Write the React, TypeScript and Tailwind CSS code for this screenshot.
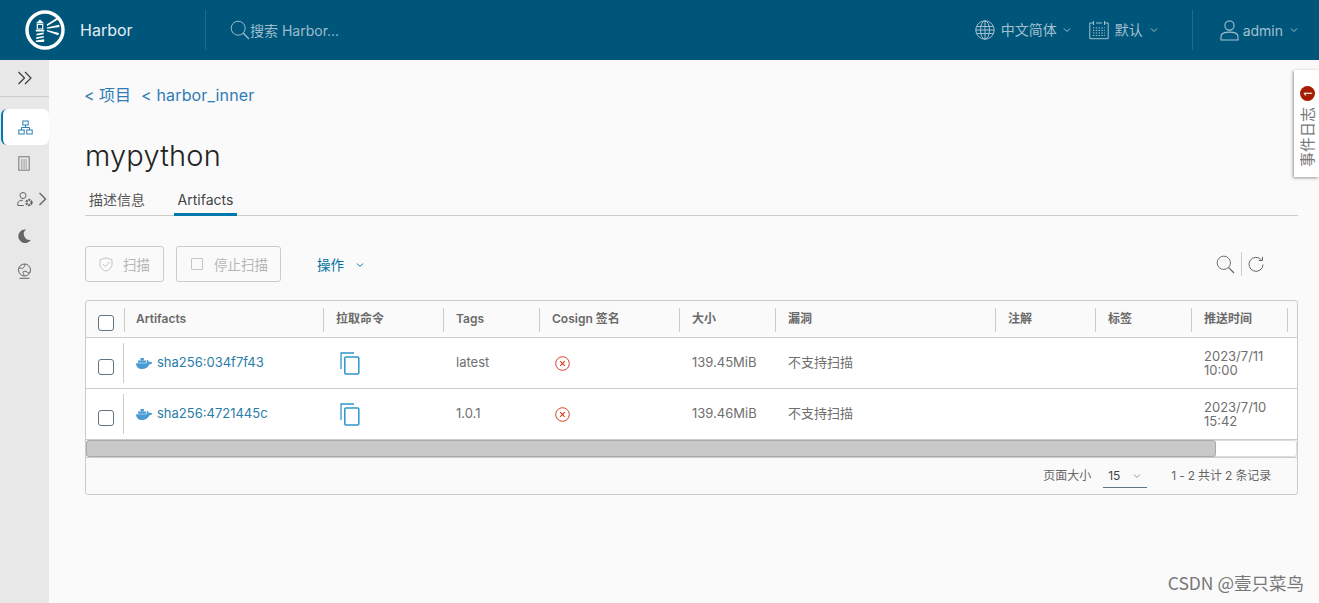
import React from "react";

const font = { fontFamily: 'Inter,"Noto Sans CJK SC",sans-serif' };

function Logo() {
  return (
    <svg width="40" height="40" viewBox="0 0 40 40" fill="none">
      <circle cx="20" cy="20" r="18" stroke="#fff" strokeWidth="3.400" />
      <path d="M11 13.200 L15 9.500 L19 13.200 Z" fill="#fff" />
      <path d="M12.300 14.300h5.400v4.700h-5.400z" stroke="#fff" strokeWidth="1.200" />
      <path d="M10.800 19.800h8.400v1.600h-8.400z" fill="#fff" />
      <path d="M11.600 23.800l7-1.200v1.600l-7.100 1.200zM11.300 27.200l7.500-1.300.1 1.700-7.800 1.300zM11 30.600l8.100-1.300.2 2.200-1 .6h-7.600z" fill="#fff" />
      <path d="M21.700 14.600l10.200-6.800 1.500 1.400-11.200 6.900zM21.900 17.500l12.200-2.700.5 2.300-12.700 1.600zM21.900 20l12.100 3-.8 2.300-11.300-4z" fill="#fff" />
    </svg>
  );
}

function Chevron({ cls = "" }: { cls?: string }) {
  return (
    <svg width="8" height="6" viewBox="0 0 8 6" fill="none" className={cls}>
      <path d="M1 1.500l3 3 3-3" stroke="currentColor" strokeWidth="1" />
    </svg>
  );
}

function Globe() {
  return (
    <svg width="20" height="20" viewBox="0 0 20 20" fill="none" stroke="currentColor" strokeWidth="1">
      <circle cx="10" cy="10" r="9.200" />
      <ellipse cx="10" cy="10" rx="4.500" ry="9.200" />
      <path d="M10 .8v18.400M1.600 6.500h16.800M1.600 13.500h16.800M.8 10h18.400" />
    </svg>
  );
}

function Calendar() {
  return (
    <svg width="20" height="20" viewBox="0 0 20 20" fill="none" stroke="currentColor" strokeWidth="1">
      <path d="M4 3H.8v15.700h18.400V3H16M7 3h6M4.500 1v4M15.500 1v4" />
      <path d="M4 8h12M4 10.500h12M4 13h12M4 15.500h12" strokeDasharray="1.400 1.400" />
    </svg>
  );
}

function User() {
  return (
    <svg width="19" height="21" viewBox="0 0 19 21" fill="none" stroke="currentColor" strokeWidth="1.100">
      <circle cx="9.500" cy="5.500" r="4.600" />
      <path d="M1 20v-3.500c0-2.600 3.500-4.400 8.500-4.400s8.500 1.800 8.500 4.400V20z" />
    </svg>
  );
}

function Search({ size = 20 }: { size?: number }) {
  return (
    <svg width={size} height={size} viewBox="0 0 20 20" fill="none" stroke="currentColor" strokeWidth="1">
      <circle cx="8.200" cy="8.200" r="7" />
      <path d="M13.300 13.300l5.700 5.700" strokeWidth="1.300" />
    </svg>
  );
}

function Docker() {
  return (
    <svg width="17" height="12" viewBox="0 0 17 12">
      <path d="M0 6.200h10.600c.3-1 .3-2 0-2.800l1-.6c.7.6 1.100 1.400 1.200 2.200 1.300-.4 2.500-.3 3.700.4-.7 1.200-1.800 1.800-3.100 1.800C12.300 10 9.500 12 6 12 2.400 12 .2 10 0 6.200z" fill="#4a9ad4" />
      <path d="M2 3.500h8v2.200H2zM4.500 1h3.400v2.200H4.500z" fill="#4a9ad4" />
    </svg>
  );
}

function Copy() {
  return (
    <svg width="20" height="23" viewBox="0 0 20 23" fill="none" stroke="#2f96cc" strokeWidth="1.500">
      <path d="M1 17V1h13" strokeWidth="1.300" />
      <rect x="4.800" y="5" width="14" height="17" rx="1" />
    </svg>
  );
}

function XCircle() {
  return (
    <svg width="15" height="15" viewBox="0 0 15 15" fill="none" stroke="#d8412a" strokeWidth="1">
      <circle cx="7.500" cy="7.500" r="6.800" />
      <path d="M5.200 5.200l4.600 4.600M9.800 5.200l-4.600 4.600" strokeWidth="1.200" />
    </svg>
  );
}

function Checkbox() {
  return <div className="w-4 h-4 rounded-[3px] border border-[#5f7380] bg-white" />;
}

const widths = [39, 199, 120, 96, 140, 96, 220, 100, 96, 96];
const headers = ["", "Artifacts", "拉取命令", "Tags", "Cosign 签名", "大小", "漏洞", "注解", "标签", "推送时间"];

function Row({ hash, tag, size, d1, d2 }: { hash: string; tag: string; size: string; d1: string; d2: string }) {
  const cell = "flex items-center pl-3 shrink-0 text-[13px] text-[#6f6f6f]";
  return (
    <div className="flex h-[51px] border-b border-[#cccccc] bg-white">
      <div className="w-[38px] shrink-0 flex items-center justify-center pl-[2px] pt-[8px] relative">
        <Checkbox />
        <div className="absolute right-0 top-[5px] bottom-[5px] w-px bg-[#cccccc]" />
      </div>
      <div className="w-[200px] shrink-0 flex items-center pl-3 gap-1 text-[13px] text-[#2a7ca8]">
        <Docker />
        <span>{hash}</span>
      </div>
      <div className="w-[120px] shrink-0 flex items-center pl-4">
        <Copy />
      </div>
      <div className={`${cell} w-[96px]`}>{tag}</div>
      <div className={`${cell} w-[140px] pl-[15px]`}>
        <XCircle />
      </div>
      <div className={`${cell} w-[96px]`}>{size}</div>
      <div className={`${cell} w-[220px]`}>不支持扫描</div>
      <div className="w-[100px] shrink-0" />
      <div className="w-[96px] shrink-0" />
      <div className={`${cell} w-[96px] leading-[14px]`}>
        <div>
          {d1}
          <br />
          {d2}
        </div>
      </div>
    </div>
  );
}

export default function App() {
  return (
    <div className="w-[1319px] h-[603px] overflow-hidden flex flex-col bg-[#fafafa] relative" style={font}>
      <header className="h-[60px] shrink-0 bg-[#00567a] flex items-center text-[#a3c0cf]">
        <div className="w-[206px] h-10 shrink-0 flex items-center pl-[25px] border-r border-[#1f6c8c]">
          <Logo />
          <span className="ml-[15px] text-[16px] text-[#e4eef3]">Harbor</span>
        </div>
        <div className="flex items-center pl-[24px] text-[#9dbccb]">
          <Search />
          <span className="text-[14px] leading-none pt-[1px]">搜索 Harbor...</span>
        </div>
        <div className="ml-auto flex items-center">
          <div className="flex items-center">
            <Globe />
            <span className="ml-[6px] text-[14px] leading-[20px] -mt-[1px]">中文简体</span>
            <Chevron cls="ml-[6px]" />
          </div>
          <div className="flex items-center ml-[18px]">
            <Calendar />
            <span className="ml-[6px] text-[14px] leading-[20px] -mt-[1px]">默认</span>
            <Chevron cls="ml-[7px]" />
          </div>
          <div className="w-px h-10 bg-[#1f6c8c] ml-[34px]" />
          <div className="flex items-center ml-[27px] mr-[21px]">
            <User />
            <span className="ml-[4px] text-[14px]">admin</span>
            <Chevron cls="ml-[7px]" />
          </div>
        </div>
      </header>

      <div className="flex-1 flex min-h-0">
        <aside className="w-[49px] shrink-0 bg-[#e8e8e8] flex flex-col text-[#666]">
          <div className="h-[37px] border-b border-[#cccccc] flex items-center justify-center">
            <svg width="16" height="14" viewBox="0 0 16 14" fill="none" stroke="#333" strokeWidth="1.100">
              <path d="M1.500 1l6 6-6 6M8 1l6 6-6 6" />
            </svg>
          </div>
          <div className="mt-3 ml-[1px] h-9 bg-white rounded-md border-l-2 border-[#0079ad] flex items-center justify-center pr-[2px]">
            <svg width="15" height="15" viewBox="0 0 15 15" fill="none" stroke="#2c7fb0" strokeWidth="1">
              <rect x="4.800" y="1" width="5.400" height="4" />
              <rect x=".8" y="10" width="5.400" height="4" />
              <rect x="8.800" y="10" width="5.400" height="4" />
              <path d="M7.500 5v2.500M3.500 10V7.500h8V10" />
            </svg>
          </div>
          <div className="mt-[11px] h-[16px] flex justify-center pr-[1px]">
            <svg width="12" height="15" viewBox="0 0 12 15" fill="none" stroke="#777" strokeWidth="1">
              <rect x=".8" y=".8" width="10.400" height="13.400" />
              <path d="M3 4h6M3 6h6M3 8h6M3 10h6M3 12h6" strokeDasharray="1 .6" />
            </svg>
          </div>
          <div className="mt-[19px] h-[16px] flex items-center pl-[17px] gap-[4px]">
            <svg width="17" height="15" viewBox="0 0 17 15" fill="none" stroke="#666" strokeWidth="1">
              <circle cx="6" cy="3.500" r="3" />
              <path d="M.8 13.500v-2.300c0-1.700 2.400-3 5.200-3M.8 13.500h6" />
              <circle cx="12" cy="10.500" r="2.600" strokeWidth="2.200" strokeDasharray="2 .8" />
            </svg>
            <svg width="9" height="14" viewBox="0 0 9 14" fill="none" stroke="#666" strokeWidth="1.400">
              <path d="M1.500 1l6 6-6 6" />
            </svg>
          </div>
          <div className="mt-[22px] h-[14px] flex justify-center pr-[1px]">
            <svg width="13" height="14" viewBox="0 0 13 14">
              <path d="M8 .5A6.800 6.800 0 1 0 12.800 11 6 6 0 0 1 8 .5z" fill="#666" />
            </svg>
          </div>
          <div className="mt-[20px] h-[16px] flex justify-center pr-[1px]">
            <svg width="15" height="16" viewBox="0 0 15 16" fill="none" stroke="#666" strokeWidth="1">
              <circle cx="7.500" cy="7" r="6" />
              <path d="M2 5c2 0 3 1 4 0s2-2 2-4M7 13c0-2-1-3-1-4s3-1 4 0 2 1 3 0M2.500 15.300h10" />
            </svg>
          </div>
        </aside>

        <main className="flex-1 min-w-0 pl-9 pr-[21px] flex flex-col">
          <div className="mt-[25px] h-[20px] flex items-center gap-[10px] text-[16px] text-[#2f7cb5] -ml-[1px]">
            <span>&lt; 项目</span>
            <span className="tracking-[0.15px]">&lt; harbor_inner</span>
          </div>
          <h1 className="mt-[33px] h-[36px] flex items-center text-[29px] font-light text-[#222] tracking-[0.2px]">mypython</h1>
          <div className="mt-[15px] h-[27px] flex border-b border-[#cccccc] text-[14px]">
            <div className="w-[60px] ml-1 text-[#555] leading-[20px] pt-[1px]">描述信息</div>
            <div className="ml-[25px] w-[63px] h-[27px] text-center text-[#444] leading-[20px] pt-[1px] border-b-[3px] border-[#0079ad]">Artifacts</div>
          </div>
          <div className="mt-[30px] h-[36px] flex items-center text-[13.5px] text-[#b5b5b5]">
            <div className="w-[79px] h-[36px] border border-[#cccccc] rounded-[3px] flex items-center pl-[13px] gap-[10px]">
              <svg width="14" height="15" viewBox="0 0 14 15" fill="none" stroke="#c4c4c4" strokeWidth="1">
                <path d="M7 .8l6 2v5c0 3-2.500 5-6 6.400C3.500 12.800 1 10.800 1 7.800v-5zM4 7l2.500 2.500L10.500 5" />
              </svg>
              <span className="pt-[2px]">扫描</span>
            </div>
            <div className="ml-3 w-[105px] h-[36px] border border-[#cccccc] rounded-[3px] flex items-center pl-[14px] gap-[11px]">
              <div className="w-3 h-3 border border-[#c4c4c4] rounded-[1px]" />
              <span className="pt-[2px]">停止扫描</span>
            </div>
            <div className="ml-[36px] flex items-center text-[#0072a3] pt-[2px]">
              <span>操作</span>
              <Chevron cls="ml-[12px]" />
            </div>
            <div className="ml-auto mr-[34px] flex items-center text-[#666]">
              <Search size={19} />
              <div className="w-px h-6 bg-[#cccccc] mx-[6px]" />
              <svg width="16" height="16" viewBox="0 0 16 16" fill="none" stroke="#666" strokeWidth="1">
                <path d="M13.500 4A7 7 0 1 0 15 8.500M14.500 .8v3.700h-3.800" />
              </svg>
            </div>
          </div>
          <div className="mt-[18px] h-[195px] border border-[#cccccc] rounded-[3px] flex flex-col">
            <div className="h-[37px] shrink-0 flex border-b border-[#cccccc] text-[12px] font-semibold text-[#6a6a6a] items-center">
              {headers.map((h, i) => (
                <div key={i} className="h-full shrink-0 relative flex items-center pl-3" style={{ width: widths[i] }}>
                  {i === 0 ? (
                    <div className="mt-[7px]">
                      <Checkbox />
                    </div>
                  ) : i === 1 ? (
                    <span className="-ml-[1px]">{h}</span>
                  ) : (
                    h
                  )}
                  <div className="absolute right-0 top-[7px] bottom-[5px] w-px bg-[#cccccc]" />
                </div>
              ))}
            </div>
            <Row hash="sha256:034f7f43" tag="latest" size="139.45MiB" d1="2023/7/11" d2="10:00" />
            <Row hash="sha256:4721445c" tag="1.0.1" size="139.46MiB" d1="2023/7/10" d2="15:42" />
            <div className="h-[18px] shrink-0 border-b border-[#cccccc] bg-[#fafafa]">
              <div className="h-[17px] rounded-[3px] border border-[#dddddd] bg-white">
                <div className="w-[1130px] h-[17px] -mt-px -ml-px bg-[#c9c9c9] border border-[#aaaaaa] rounded-[3px]" />
              </div>
            </div>
            <div className="flex-1 flex items-center justify-end pr-[26px] text-[12px] text-[#666]">
              <span>页面大小</span>
              <div className="ml-3 w-[44px] h-[24px] border-b border-[#5f7380] flex items-center justify-between px-[5px] text-[#444]">
                <span>15</span>
                <Chevron cls="text-[#999] mr-[1px]" />
              </div>
              <span className="ml-6 tracking-[-0.15px]">1 - 2 共计 2 条记录</span>
            </div>
          </div>
        </main>
      </div>

      <div className="absolute left-[1294px] top-[70px] w-[25px] h-[107px] bg-white shadow-[-1px_1px_3px_rgba(0,0,0,0.4)] flex flex-col items-center pt-[16px] pl-[1px]">
        <div className="w-[15px] h-[15px] rounded-full bg-[#a61c00] text-white text-[10px] flex items-center justify-center rotate-180 [writing-mode:vertical-rl] [text-orientation:sideways] leading-none">
          1
        </div>
        <div className="mt-[6px] rotate-180 [writing-mode:vertical-rl] [text-orientation:sideways] text-[15px] leading-[15px] text-[#777]">事件日志</div>
      </div>

      <div className="absolute right-[15px] bottom-[7px] text-[17.5px] text-[#777]" style={{ fontFamily: '"Noto Sans CJK SC",sans-serif' }}>
        CSDN @壹只菜鸟
      </div>
    </div>
  );
}
